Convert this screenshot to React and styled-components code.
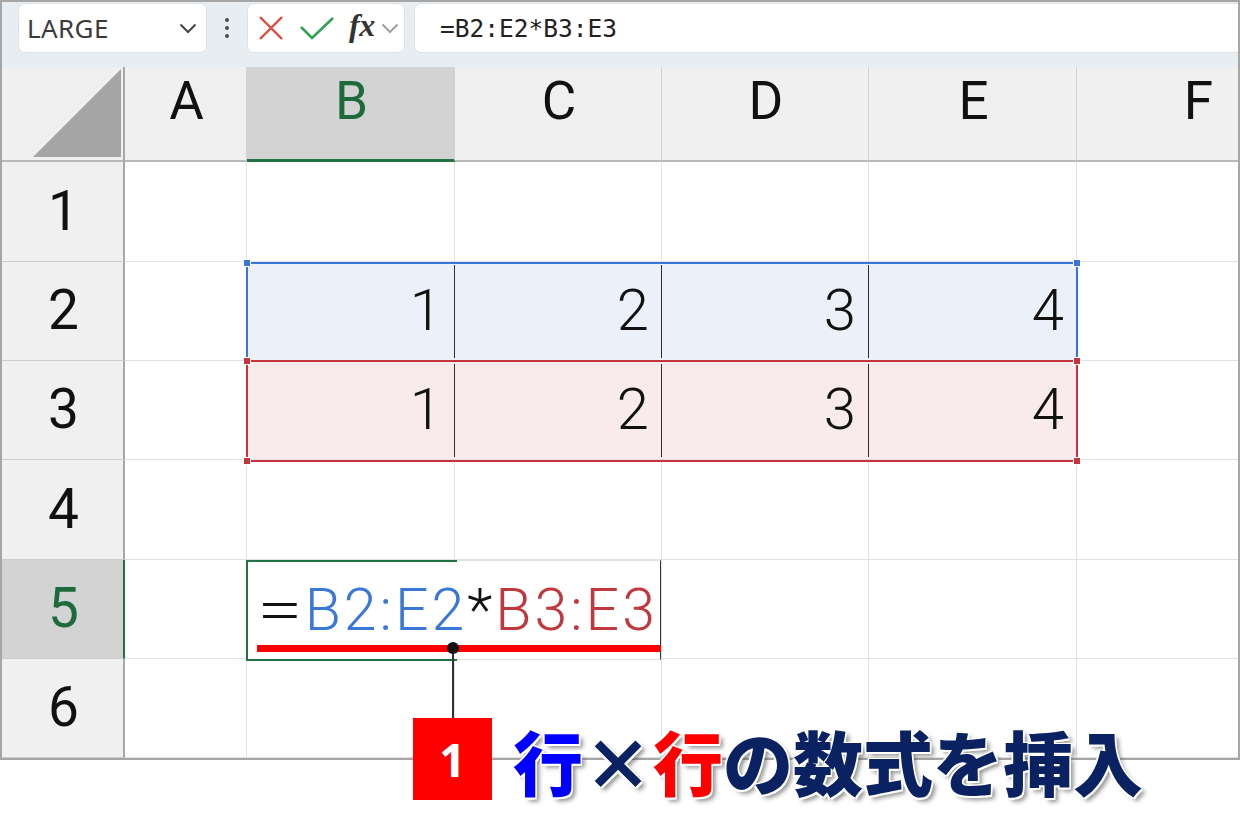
import React from "react";
import styled, { createGlobalStyle } from "styled-components";

const GlobalStyle = createGlobalStyle`
  html, body { margin: 0; padding: 0; background: #ffffff; }
  *, *::before, *::after { box-sizing: border-box; }
`;

const GREEN = "#217346";
const BLUE = "#3a74d6";
const RED = "#c7343d";

const Page = styled.div`
  position: relative;
  width: 1240px;
  height: 823px;
  overflow: hidden;
  background: #ffffff;
`;

const Frame = styled.div`
  width: 1240px;
  border: 2px solid #a6a6a6;
  display: flex;
  flex-direction: column;
  overflow: hidden;
`;

const FormulaBar = styled.div`
  height: 65px;
  background: #e7edf0;
  display: flex;
  align-items: flex-start;
  padding: 1px 0 0 16px;
`;

const Box = styled.div`
  height: 50px;
  background: #ffffff;
  border: 1px solid #dde3e6;
  border-radius: 7px;
  display: flex;
  align-items: center;
`;

const NameBox = styled(Box)`
  width: 189px;
  padding: 0 9px 0 8px;
  justify-content: space-between;
  font-family: "Noto Sans", "Open Sans", sans-serif;
  font-size: 26px;
  color: #3a3a3a;
  letter-spacing: 0.4px;
`;

const Dots = styled.div`
  width: 40px;
  height: 50px;
  display: flex;
  flex-direction: column;
  align-items: center;
  justify-content: center;
  gap: 4px;
  & span {
    width: 4px;
    height: 4px;
    border-radius: 50%;
    background: #4a4a4a;
  }
`;

const ToolBox = styled(Box)`
  width: 158px;
  padding: 0 0 0 10px;
`;

const Fx = styled.span`
  font-family: "Liberation Serif", "DejaVu Serif", serif;
  font-style: italic;
  font-weight: 700;
  font-size: 32px;
  color: #333;
  margin: -5px 6px 0 15px;
  letter-spacing: -0.5px;
`;

const FormulaInput = styled(Box)`
  flex: 1;
  margin-left: 9px;
  border-right: none;
  border-radius: 7px 0 0 7px;
  padding-left: 25px;
  font-family: "DejaVu Sans Mono", "Liberation Mono", monospace;
  font-size: 24.5px;
  color: #222;
`;

const Sheet = styled.div`
  display: grid;
  grid-template-columns: 123px 122px 208px 207px 207px 208px 242px;
  grid-template-rows: 95px 100px 99px 99px 100px 99px 99px;
  font-family: Roboto, "Noto Sans", sans-serif;
`;

const Corner = styled.div`
  background: #f0f0f0;
  border-right: 2px solid #a8a8a8;
  border-bottom: 2px solid #b9b9b9;
  display: flex;
  align-items: flex-end;
  justify-content: flex-end;
  padding: 0 2px 3px 0;
`;

const ColHead = styled.div`
  background: ${(p) => (p.$active ? "#d3d3d3" : "#f0f0f0")};
  border-right: 1px solid #d2d2d2;
  border-bottom: ${(p) => (p.$active ? `3px solid ${GREEN}` : "2px solid #b9b9b9")};
  color: ${(p) => (p.$active ? "#1d6b3d" : "#111")};
  font-size: 53px;
  line-height: 1;
  display: flex;
  justify-content: ${(p) => (p.$align === "right" ? "flex-end" : "center")};
  padding: 8px ${(p) => (p.$align === "right" ? "105px" : "0")} 0 2px;
`;

const RowHead = styled.div`
  background: ${(p) => (p.$active ? "#d3d3d3" : "#f0f0f0")};
  border-right: 2px solid ${(p) => (p.$active ? GREEN : "#a8a8a8")};
  border-bottom: 1px solid #cdcdcd;
  color: ${(p) => (p.$active ? "#1d6b3d" : "#111")};
  font-size: 55px;
  display: flex;
  align-items: center;
  justify-content: center;
  padding: 0 0 2px 2px;
`;

const Cell = styled.div`
  position: relative;
  background: ${(p) => p.$fill || "#ffffff"};
  border-right: 1px solid ${(p) => (p.$divider ? "transparent" : "#e1e1e1")};
  border-bottom: 1px solid #e1e1e1;
  font-size: 58px;
  font-weight: 300;
  color: #111;
  display: flex;
  align-items: center;
  justify-content: flex-end;
  padding-right: 12px;
  padding-bottom: 2px;
  &::after {
    content: "";
    display: ${(p) => (p.$divider ? "block" : "none")};
    position: absolute;
    right: -1px;
    top: 3px;
    bottom: 2px;
    width: 1.5px;
    background: #2e2e2e;
  }
`;

const Range = styled.div`
  position: absolute;
  left: ${(p) => p.$x}px;
  top: ${(p) => p.$y}px;
  width: ${(p) => p.$w}px;
  height: ${(p) => p.$h}px;
  border: 2px solid ${(p) => p.$color};
  pointer-events: none;
`;

const Handle = styled.span`
  position: absolute;
  width: 8px;
  height: 8px;
  background: ${(p) => p.$color};
  border: 1px solid #fff;
  left: ${(p) => (p.$right ? "auto" : "-5px")};
  right: ${(p) => (p.$right ? "-5px" : "auto")};
  top: ${(p) => (p.$bottom ? "auto" : "-5px")};
  bottom: ${(p) => (p.$bottom ? "-5px" : "auto")};
`;

const EditBox = styled.div`
  position: absolute;
  left: 246px;
  top: 560px;
  width: 415px;
  height: 100px;
  background: #ffffff;
  border-top: 1px solid #e1e1e1;
  border-bottom: 1px solid #e1e1e1;
  border-right: 1.5px solid #333;
  display: flex;
  align-items: center;
  padding: 0 0 2px 11px;
  font-family: Roboto, "Noto Sans", sans-serif;
  font-size: 59px;
  font-weight: 300;
  letter-spacing: 3px;
  white-space: nowrap;
`;

const GreenFrame = styled.div`
  position: absolute;
  left: 0;
  top: -1px;
  width: 211px;
  height: 101px;
  border: 2px solid ${GREEN};
  border-right: none;
`;

const Part = styled.span`
  position: relative;
  color: ${(p) => p.$color || "#111"};
`;

const Equals = styled.span`
  position: relative;
  display: inline-block;
  color: #111;
  font-weight: 300;
  transform: scaleX(1.4);
  transform-origin: left center;
  margin-right: 12px;
`;

const Underline = styled.div`
  position: absolute;
  left: 257px;
  top: 645px;
  width: 404px;
  height: 7px;
  background: #ff0000;
`;

const Dot = styled.div`
  position: absolute;
  left: 447px;
  top: 642px;
  width: 12px;
  height: 12px;
  border-radius: 50%;
  background: #111;
`;

const Leader = styled.div`
  position: absolute;
  left: 452px;
  top: 650px;
  width: 1.5px;
  height: 68px;
  background: #333;
`;

const Callout = styled.div`
  position: absolute;
  left: 413px;
  top: 718px;
  display: flex;
  align-items: center;
  gap: 21px;
`;

const Badge = styled.div`
  width: 79px;
  height: 82px;
  background: #ff0000;
  color: #fff;
  font-family: "Noto Sans", sans-serif;
  font-weight: 700;
  font-size: 46px;
  display: flex;
  align-items: center;
  justify-content: center;
  text-shadow: 0 0 1px #999;
`;

const Title = styled.div`
  font-family: "Noto Sans CJK JP", "Noto Sans CJK SC", sans-serif;
  font-weight: 900;
  font-size: 70px;
  line-height: 1;
  color: #0b2262;
  white-space: nowrap;
  margin-top: 4px;
  text-shadow:
    -1.5px -1.5px 0 #fff, 1.5px -1.5px 0 #fff, -1.5px 1.5px 0 #fff, 1.5px 1.5px 0 #fff,
    4px 4px 4px rgba(60, 60, 60, 0.55);
`;

const Tint = styled.span`
  color: ${(p) => p.$color};
`;

const Cross = () => (
  <svg width="26" height="26" viewBox="0 0 26 26">
    <path d="M2 2 L24 24 M24 2 L2 24" stroke="#e8463f" strokeWidth="2.4" fill="none" />
  </svg>
);

const Check = () => (
  <svg width="34" height="24" viewBox="0 0 34 24" style={{ marginLeft: 16 }}>
    <path d="M1 11 L12 22 L33 2" stroke="#2ea44f" strokeWidth="2.6" fill="none" />
  </svg>
);

const Chevron = ({ color = "#444", w = 18 }) => (
  <svg width={w} height="11" viewBox="0 0 18 11">
    <path d="M1.5 1.5 L9 9 L16.5 1.5" stroke={color} strokeWidth="2" fill="none" />
  </svg>
);

const CornerTriangle = () => (
  <svg width="88" height="88" viewBox="0 0 88 88">
    <path d="M0 88 L88 88 L88 0 Z" fill="#a5a5a5" />
  </svg>
);

const cols = ["A", "B", "C", "D", "E", "F"];
const rowData = {
  2: { fill: "#ebf0f9", values: [1, 2, 3, 4] },
  3: { fill: "#f9eaeb", values: [1, 2, 3, 4] },
};

export default function App() {
  return (
    <Page>
      <GlobalStyle />
      <Frame>
        <FormulaBar>
          <NameBox>
            <span>LARGE</span>
            <Chevron />
          </NameBox>
          <Dots>
            <span />
            <span />
            <span />
          </Dots>
          <ToolBox>
            <Cross />
            <Check />
            <Fx>fx</Fx>
            <Chevron color="#a0a0a0" w={18} />
          </ToolBox>
          <FormulaInput>=B2:E2*B3:E3</FormulaInput>
        </FormulaBar>
        <Sheet>
          <Corner>
            <CornerTriangle />
          </Corner>
          {cols.map((c) => (
            <ColHead key={c} $active={c === "B"} $align={c === "F" ? "right" : "center"}>
              {c}
            </ColHead>
          ))}
          {[1, 2, 3, 4, 5, 6].map((r) => (
            <React.Fragment key={r}>
              <RowHead $active={r === 5}>{r}</RowHead>
              {cols.map((c, i) => {
                const d = rowData[r];
                const inRange = d && i >= 1 && i <= 4;
                return (
                  <Cell
                    key={c}
                    $fill={inRange ? d.fill : undefined}
                    $divider={inRange && i < 4}
                  >
                    {inRange ? d.values[i - 1] : ""}
                  </Cell>
                );
              })}
            </React.Fragment>
          ))}
        </Sheet>
      </Frame>

      <Range $x={246} $y={262} $w={832} $h={100} $color={BLUE}>
        <Handle $color={BLUE} />
        <Handle $color={BLUE} $right />
      </Range>
      <Range $x={246} $y={360} $w={832} $h={102} $color={RED}>
        <Handle $color={RED} />
        <Handle $color={RED} $right />
        <Handle $color={RED} $bottom />
        <Handle $color={RED} $right $bottom />
      </Range>

      <EditBox>
        <GreenFrame />
        <Equals>=</Equals>
        <Part $color="#3a78d8">B2:E2</Part>
        <Part>*</Part>
        <Part $color="#c0373d">B3:E3</Part>
      </EditBox>
      <Underline />
      <Leader />
      <Dot />

      <Callout>
        <Badge>1</Badge>
        <Title>
          <Tint $color="#0000ff">行</Tint>×<Tint $color="#ff0000">行</Tint>の数式を挿入
        </Title>
      </Callout>
    </Page>
  );
}
